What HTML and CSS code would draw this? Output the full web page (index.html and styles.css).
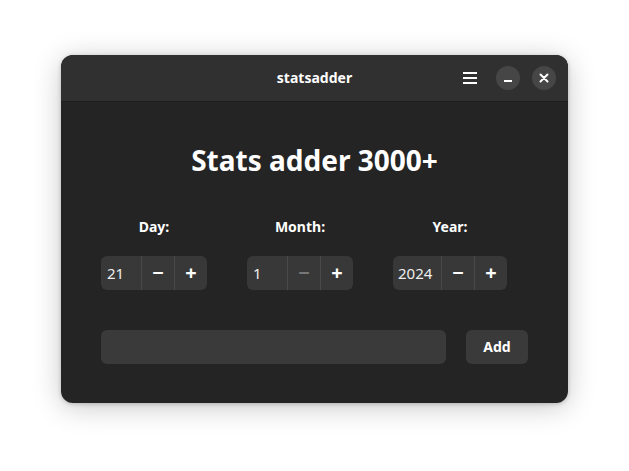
FILE: index.html
```html
<!DOCTYPE html>
<html>
<head>
<meta charset="utf-8">
<link rel="stylesheet" href="styles.css">
</head>
<body>
<div class="window">
  <header class="headerbar">
    <div class="title">statsadder</div>
    <div class="controls">
      <span class="menu">
        <svg width="16" height="14" viewBox="0 0 16 14"><rect x="1" y="1" width="14" height="2" fill="#fff"/><rect x="1" y="6" width="14" height="2" fill="#fff"/><rect x="1" y="11" width="14" height="2" fill="#fff"/></svg>
      </span>
      <span class="wbtn">
        <svg width="10" height="10" viewBox="0 0 10 10"><rect x="1" y="7" width="8" height="2" fill="#fff"/></svg>
      </span>
      <span class="wbtn">
        <svg width="10" height="10" viewBox="0 0 10 10"><path d="M1.5 1.5 L8.5 8.5 M8.5 1.5 L1.5 8.5" stroke="#fff" stroke-width="2" stroke-linecap="round"/></svg>
      </span>
    </div>
  </header>
  <main class="content">
    <h1 class="heading">Stats adder 3000+</h1>
    <div class="fields">
      <div class="field">
        <div class="label">Day:</div>
        <div class="spin">
          <div class="value">21</div>
          <div class="sbtn">&minus;</div>
          <div class="sbtn">+</div>
        </div>
      </div>
      <div class="field">
        <div class="label">Month:</div>
        <div class="spin">
          <div class="value">1</div>
          <div class="sbtn disabled">&minus;</div>
          <div class="sbtn">+</div>
        </div>
      </div>
      <div class="field">
        <div class="label">Year:</div>
        <div class="spin">
          <div class="value wide">2024</div>
          <div class="sbtn">&minus;</div>
          <div class="sbtn">+</div>
        </div>
      </div>
    </div>
    <div class="addrow">
      <div class="entry"></div>
      <div class="addbtn">Add</div>
    </div>
  </main>
</div>
</body>
</html>
```
FILE: styles.css
```css
html, body {
  margin: 0;
  padding: 0;
  background: #ffffff;
  font-family: "Noto Sans", "Open Sans", sans-serif;
}
html {
  height: 100%;
}
body {
  min-height: 100%;
  box-sizing: border-box;
  padding: 55px 0 40px 61px;
}
.window {
  width: 507px;
  height: 348px;
  border-radius: 12px;
  background: #242424;
  overflow: hidden;
  box-shadow: 0 4px 28px rgba(0,0,0,0.22), 0 1px 4px rgba(0,0,0,0.2);
  color: #fff;
}
.headerbar {
  height: 46px;
  background: #303030;
  border-bottom: 1px solid #1e1e1e;
  display: flex;
  align-items: center;
  justify-content: center;
  position: relative;
}
.title {
  font-weight: 700;
  font-size: 14px;
  margin-top: -2px;
}
.controls {
  position: absolute;
  right: 12px;
  top: 11px;
  display: flex;
  align-items: center;
  gap: 12px;
}
.menu {
  width: 24px;
  height: 24px;
  display: flex;
  align-items: center;
  justify-content: center;
  margin-right: 2px;
}
.wbtn {
  width: 24px;
  height: 24px;
  border-radius: 50%;
  background: #464646;
  display: flex;
  align-items: center;
  justify-content: center;
}
.content {
  padding: 0 40px;
  display: flex;
  flex-direction: column;
}
.heading {
  margin: 40px 0 0;
  font-size: 28px;
  font-weight: 700;
  text-align: center;
  line-height: 36px;
}
.fields {
  display: flex;
  gap: 40px;
  margin-top: 40px;
}
.field {
  display: flex;
  flex-direction: column;
  align-items: center;
  gap: 20px;
}
.label {
  font-size: 14px;
  font-weight: 700;
  line-height: 18px;
}
.spin {
  display: flex;
  height: 34px;
  background: #383838;
  border-radius: 6px;
  overflow: hidden;
}
.value {
  width: 40px;
  padding-left: 6px;
  box-sizing: border-box;
  font-size: 15px;
  line-height: 34px;
  color: #eee;
}
.value.wide {
  width: 48px;
  padding-left: 5px;
}
.sbtn {
  width: 33px;
  border-left: 1px solid #4a4a4a;
  box-sizing: border-box;
  text-align: center;
  font-size: 20px;
  font-weight: 700;
  line-height: 33px;
}
.sbtn.disabled {
  color: #777;
}
.addrow {
  display: flex;
  gap: 20px;
  margin-top: 40px;
}
.entry {
  flex: 1;
  height: 34px;
  background: #3a3a3a;
  border-radius: 6px;
}
.addbtn {
  width: 62px;
  height: 34px;
  background: #3a3a3a;
  border-radius: 6px;
  font-size: 14px;
  font-weight: 700;
  line-height: 34px;
  text-align: center;
}
```
